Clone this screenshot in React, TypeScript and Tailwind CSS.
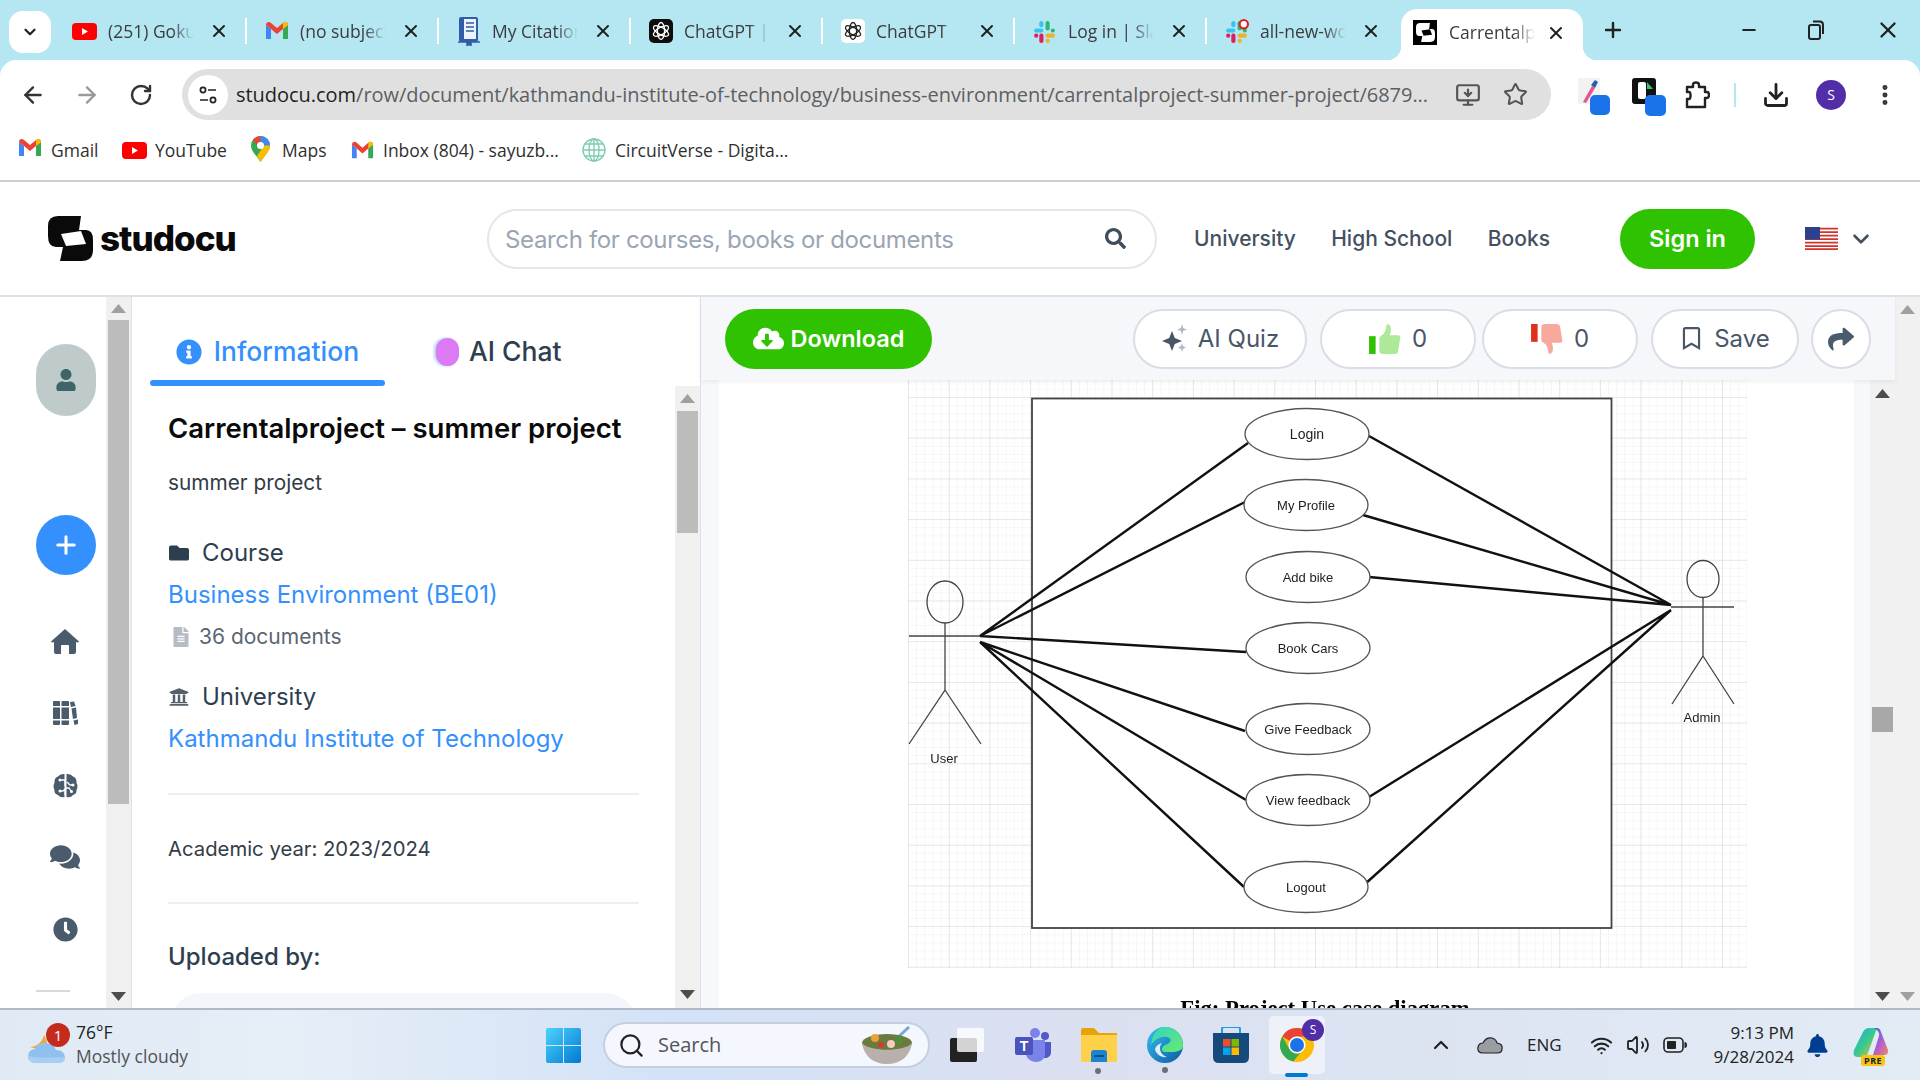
import React from "react";
import { ArrowLeft, ArrowRight, RotateCw, X, Plus, Minus, Star, MonitorDown, Download, EllipsisVertical, ChevronDown, ChevronUp, Search, Volume2, Wifi } from "lucide-react";
import { FaUser, FaComments, FaClock, FaFolder, FaFileAlt, FaUniversity, FaShare, FaRegBookmark, FaCloudDownloadAlt, FaInfoCircle, FaSearch, FaBell } from "react-icons/fa";

const Gmail = ({ s = 24 }: { s?: number }) => (
  <svg width={s} height={s} viewBox="0 0 24 24" className="shrink-0">
    <path d="M1 6v14h5V10z" fill="#4285f4" />
    <path d="M18 10v10h5V6z" fill="#34a853" />
    <path d="M1 6c0-3 3-4 5-2l6 5 6-5c2-2 5-1 5 2l-5 4-6 5-6-5z" fill="#ea4335" />
    <path d="M18 4c2-2 5-1 5 2l-5 4z" fill="#fbbc04" />
  </svg>
);
const YT = () => (
  <svg width="25" height="17" viewBox="0 0 25 17" className="shrink-0">
    <rect width="25" height="17" rx="4" fill="#f00" />
    <path d="M10 5l6 3.500-6 3.500z" fill="#fff" />
  </svg>
);
const Slack = ({ dot }: { dot?: boolean }) => (
  <svg width="25" height="25" viewBox="0 0 24 24" className="shrink-0">
    <rect x="2" y="9" width="9" height="4" rx="2" fill="#36c5f0" />
    <rect x="7" y="2" width="4" height="6" rx="2" fill="#36c5f0" />
    <rect x="13" y="2" width="4" height="9" rx="2" fill="#2eb67d" />
    <rect x="18" y="9" width="4" height="4" rx="2" fill="#2eb67d" />
    <rect x="13" y="14" width="9" height="4" rx="2" fill="#ecb22e" />
    <rect x="13" y="19" width="4" height="4" rx="2" fill="#ecb22e" />
    <rect x="7" y="14" width="4" height="9" rx="2" fill="#e01e5a" />
    <rect x="2" y="14" width="4" height="4" rx="2" fill="#e01e5a" />
    {dot && <circle cx="19" cy="5" r="4" fill="#fff" stroke="#e01e1e" strokeWidth="2" />}
  </svg>
);
const Gpt = ({ dark }: { dark?: boolean }) => (
  <svg width="24" height="24" viewBox="0 0 24 24" className="shrink-0">
    <rect width="24" height="24" rx="5" fill={dark ? "#0d0d0d" : "#fff"} />
    <g fill="none" stroke={dark ? "#fff" : "#222"} strokeWidth="1.300">
      <ellipse cx="12" cy="12" rx="8.500" ry="3.600" transform="rotate(30 12 12)" />
      <ellipse cx="12" cy="12" rx="8.500" ry="3.600" transform="rotate(90 12 12)" />
      <ellipse cx="12" cy="12" rx="8.500" ry="3.600" transform="rotate(150 12 12)" />
    </g>
  </svg>
);
const Cite = () => (
  <svg width="24" height="30" viewBox="0 0 24 30" className="shrink-0">
    <rect x="2" y="1" width="19" height="25" rx="2" fill="#2f5da8" />
    <rect x="7" y="3" width="12" height="20" fill="#eef3fb" />
    <path d="M9 7h8M9 11h8M9 15h8" stroke="#2f5da8" strokeWidth="1.500" />
    <path d="M1 26h22M10 26v4l2-2 2 2v-4" stroke="#2f5da8" strokeWidth="1.500" fill="#2f5da8" />
  </svg>
);
const LogoMark = ({ s = 45, fg = "#0a0a0a", bg = "#fff" }: { s?: number; fg?: string; bg?: string }) => (
  <svg width={s} height={s} viewBox="0 0 45 45" className="shrink-0">
    <path d="M10 0H33L31 14H38Q45 14 45 24V34Q45 45 34 45H12L15 31H8Q0 31 0 20V10Q0 0 10 0Z" fill={fg} />
    <path d="M13 18L33 15L38 28L18 30Z" fill={bg} />
  </svg>
);

const Tab = ({ icon, label, last }: { icon: React.ReactNode; label: string; last?: boolean }) => (
  <div className="flex h-[30px] w-[192px] shrink-0 items-center pl-[17px]">
    <span className="flex w-[25px] shrink-0 justify-center">{icon}</span>
    <span className="ml-[11px] w-[86px] shrink-0 overflow-hidden whitespace-nowrap text-[17.500px] text-[#3c3c3c] [mask-image:linear-gradient(to_right,#000_75%,transparent)]">{label}</span>
    <X size={20} strokeWidth={2.4} className="ml-[15px] shrink-0 text-[#1f1f1f]" />
    <span className={`ml-[16px] h-[26px] w-[2px] shrink-0 ${last ? "bg-transparent" : "bg-white"}`} />
  </div>
);

const Tune = () => (
  <svg width="20" height="20" viewBox="0 0 20 20" fill="none" stroke="#222" strokeWidth="1.700">
    <circle cx="5" cy="5" r="2.600" />
    <path d="M10 5h8M2 15h8" />
    <circle cx="15" cy="15" r="2.600" />
  </svg>
);

const ExtA = () => (
  <div className="relative h-[34px] w-[32px]">
    <svg width="24" height="26" viewBox="0 0 24 26">
      <rect width="22" height="26" fill="#f2f2f2" />
      <path d="M5 24L14 8l3 2-9 15z" fill="#e8548a" />
      <path d="M13 7l4-5 3 2-3 6z" fill="#2a5db0" />
    </svg>
    <span className="absolute bottom-[-3px] right-0 h-[20px] w-[20px] rounded-[5px] bg-[#1a73e8]" />
  </div>
);
const ExtB = () => (
  <div className="relative h-[34px] w-[34px]">
    <svg width="24" height="26" viewBox="0 0 24 26">
      <rect width="24" height="26" rx="3" fill="#111" />
      <rect x="6" y="4" width="8" height="17" rx="2" fill="#fff" />
      <path d="M15 4l6 7h-6z" fill="#35c46f" />
    </svg>
    <span className="absolute bottom-[-4px] right-0 h-[21px] w-[21px] rounded-[5px] bg-[#1a73e8]" />
  </div>
);
const PuzzleIcon = () => (
  <svg width="26" height="28" viewBox="0 0 26 28" fill="none" stroke="#222" strokeWidth="2.400" strokeLinejoin="round" className="shrink-0">
    <path d="M3 6H9V4Q9 1.500 12 1.500T15 4V6H21V11H23Q25 11 25 14T23 17H21V26H3V18H5Q6.500 18 6.500 14.500T5 11H3Z" />
  </svg>
);

const Arrow = ({ up, color = "#6b6b6b" }: { up?: boolean; color?: string }) => (
  <svg width="15" height="9" viewBox="0 0 15 9">
    <path d={up ? "M7.500 0L15 9H0z" : "M0 0H15L7.500 9z"} fill={color} />
  </svg>
);

const Home = () => (
  <svg width="28" height="25" viewBox="0 0 28 25" fill="#4a5b6c">
    <path d="M14 0L28 12.500Q27 14 25 13V23Q25 25 23 25H18V17Q18 16 17 16H11Q10 16 10 17V25H5Q3 25 3 23V13Q1 14 0 12.500Z" />
  </svg>
);
const Library = () => (
  <svg width="25" height="24" viewBox="0 0 25 24" fill="#4a5b6c">
    <path d="M1 0H6.500Q7 0 7 1V5H0V1Q0 0 1 0ZM0 6.500H7V18H0ZM0 19.500H7V23Q7 24 6 24H1Q0 24 0 23Z" />
    <path d="M9.500 0H15Q16 0 16 1V5H8.500V1Q8.500 0 9.500 0ZM8.500 6.500H16V18H8.500ZM8.500 19.500H16V23Q16 24 15 24H9.500Q8.500 24 8.500 23Z" />
    <path d="M17 1L21 .5L22.500 5L18 6ZM18.500 7.500L23 6.500L24 17L20 18ZM20.500 19.500L25 18.500L25 23L21.500 24Z" />
  </svg>
);
const Brain = () => (
  <svg width="25" height="25" viewBox="0 0 25 25">
    <path d="M11.500 1V24Q7 25 5 22Q1 21 1.500 17Q-.5 13 1.500 10Q1 5 5 3.500Q7 .5 11.500 1ZM13.500 1Q18 .5 20 3.500Q24 5 23.500 10Q25.500 13 23.500 17Q24 21 20 22Q18 25 13.500 24Z" fill="#4a5b6c" />
    <path d="M8 7H12V13M8 18H10L12 16V22M14 9L17 12H20M12.500 15H16L18 18" fill="none" stroke="#fff" strokeWidth="1.300" />
    <circle cx="7" cy="7" r="1.500" fill="#fff" />
    <circle cx="7" cy="18" r="1.500" fill="#fff" />
    <circle cx="18.500" cy="18.500" r="1.500" fill="#fff" />
    <circle cx="20" cy="12" r="1.500" fill="#fff" />
  </svg>
);

const Sparkle = () => (
  <svg width="26" height="30" viewBox="0 0 26 30">
    <path d="M11 7l2.800 7L21 17l-7.200 3L11 27l-2.800-7L1 17l7.200-3z" fill="#4a5668" />
    <path d="M21 0l1.200 4L26 5.500l-3.800 1.500L21 11l-1.200-4L16 5.500l3.800-1.500zM21 19l1 3 3 1.500-3 1.500-1 3-1-3-3-1.500 3-1.500z" fill="#b4bac4" />
  </svg>
);
const Thumb = ({ down }: { down?: boolean }) => (
  <svg width="32" height="30" viewBox="0 0 34 32" className={down ? "-scale-y-100" : ""}>
    <rect x="0" y="13" width="7" height="19" fill={down ? "#e0301e" : "#2ec200"} />
    <path d="M11 14L16 10C18 7 18 3 19 0C23 0 24 4 23 9L22 12H31C33 12 34 14 33 16L31 29C31 31 29 32 27 32H15C13 32 11 31 11 29Z" fill={down ? "#f6a99c" : "#aee99a"} />
  </svg>
);

const PillBtn = ({ w, className = "", children }: { w: string; className?: string; children: React.ReactNode }) => (
  <div className={`flex h-[60px] shrink-0 items-center justify-center gap-[11px] rounded-full border-2 border-[#d9dde5] bg-white text-[24px] font-normal text-[#4a5668] ${w} ${className}`}>{children}</div>
);

const Ell = ({ cx, cy, label, size = 13 }: { cx: number; cy: number; label: string; size?: number }) => (
  <g>
    <ellipse cx={cx} cy={cy} rx="62" ry="25.500" fill="#fff" stroke="#555" strokeWidth="1.300" />
    <text x={cx} y={cy + 4.500} textAnchor="middle" fontSize={size} fill="#222" fontFamily="Liberation Sans">{label}</text>
  </g>
);

const Diagram = () => (
  <svg width="1135" height="628" viewBox="719 380 1135 628" className="block blur-[0.35px]">
    <defs>
      <pattern id="minor" x="908" y="397" width="8.140" height="8.140" patternUnits="userSpaceOnUse">
        <path d="M8.140 0H0V8.140" fill="none" stroke="#efefef" strokeWidth="1" />
      </pattern>
      <pattern id="major" x="908" y="397" width="40.700" height="40.700" patternUnits="userSpaceOnUse">
        <path d="M40.700 0H0V40.700" fill="none" stroke="#d8d8d8" strokeWidth="1" />
      </pattern>
    </defs>
    <rect x="908" y="380" width="839" height="588" fill="url(#minor)" />
    <rect x="908" y="380" width="839" height="588" fill="url(#major)" />
    <rect x="1032" y="398.500" width="579.500" height="529.500" fill="#fff" stroke="#444" strokeWidth="1.800" />
    <g stroke="#111" strokeWidth="2.400" fill="none">
      <path d="M980 636L1248 443M980 636L1245 502M980 636L1246 652M980 642L1245 731M980 642L1246 800M980 642L1244 887" />
      <path d="M1671 605L1369 436M1671 605L1363 515M1671 605L1369 577M1671 610L1369 797M1671 610L1365 884" />
    </g>
    <Ell cx={1307} cy={434} label="Login" size={14} />
    <Ell cx={1306} cy={505} label="My Profile" />
    <Ell cx={1308} cy={577} label="Add bike" />
    <Ell cx={1308} cy={648} label="Book Cars" />
    <Ell cx={1308} cy={729} label="Give Feedback" />
    <Ell cx={1308} cy={800} label="View feedback" />
    <Ell cx={1306} cy={887} label="Logout" />
    <g stroke="#444" strokeWidth="1.300" fill="none">
      <ellipse cx="945" cy="602" rx="18" ry="21" />
      <path d="M909 636H980M945 623V690L909 744M945 690L981 744" />
      <ellipse cx="1703" cy="579" rx="16" ry="18.500" />
      <path d="M1671 607H1734M1703 598V656L1672 704M1703 656L1734 704" />
    </g>
    <text x="944" y="763" textAnchor="middle" fontSize="13" fill="#222" fontFamily="Liberation Sans">User</text>
    <text x="1702" y="722" textAnchor="middle" fontSize="13" fill="#222" fontFamily="Liberation Sans">Admin</text>
    <text x="1325" y="1015.500" textAnchor="middle" fontSize="22.700" fontWeight="700" fill="#000" fontFamily="Liberation Serif">Fig: Project Use case diagram</text>
  </svg>
);

const Win = () => (
  <svg width="35" height="35" viewBox="0 0 35 35" className="shrink-0">
    <defs>
      <linearGradient id="w1" x1="0" y1="0" x2="1" y2="1"><stop offset="0" stopColor="#4cd4fb" /><stop offset="1" stopColor="#0078d4" /></linearGradient>
    </defs>
    <path d="M2 0H17V17H0V2Q0 0 2 0ZM18 0H33Q35 0 35 2V17H18ZM0 18H17V35H2Q0 35 0 33ZM18 18H35V33Q35 35 33 35H18Z" fill="url(#w1)" />
  </svg>
);
const Bowl = () => (
  <svg width="52" height="38" viewBox="0 0 52 38" className="shrink-0">
    <path d="M32 16L48 1" stroke="#7aa5dd" strokeWidth="3" />
    <ellipse cx="26" cy="17" rx="25" ry="9" fill="#6b7a3e" />
    <circle cx="14" cy="12" r="4" fill="#e9a13b" />
    <circle cx="20" cy="19" r="3" fill="#d13c2e" />
    <circle cx="38" cy="14" r="4" fill="#4f8f3b" />
    <circle cx="30" cy="18" r="4" fill="#f2cfc0" />
    <path d="M1 17C3 30 12 38 26 38S49 30 51 17C44 26 8 26 1 17Z" fill="#b7b0ad" />
  </svg>
);
const Teams = () => (
  <svg width="36" height="34" viewBox="0 0 36 34" className="shrink-0">
    <circle cx="20" cy="5" r="5" fill="#7b83eb" />
    <circle cx="30" cy="8" r="4" fill="#5059c9" />
    <path d="M26 14h10v10c0 4-3 6-6 6s-4-2-4-4z" fill="#5059c9" />
    <path d="M11 12h19v14c0 5-4 8-9 8s-10-4-10-8z" fill="#7b83eb" />
    <rect x="0" y="9" width="18" height="18" rx="2" fill="#4b53bc" />
    <text x="9" y="23" textAnchor="middle" fontSize="14" fontWeight="700" fill="#fff" fontFamily="Liberation Sans">T</text>
  </svg>
);
const Folder = () => (
  <svg width="36" height="34" viewBox="0 0 36 34" className="shrink-0">
    <path d="M0 2Q0 0 2 0H13L18 5H36V12H0Z" fill="#e5a50a" />
    <path d="M0 7H36V34H0Z" fill="#ffd04a" />
    <path d="M10 34V25Q10 22 13 22H23Q26 22 26 25V34Z" fill="#1b83d0" />
    <rect x="13" y="27" width="10" height="2" fill="#0f4f86" />
  </svg>
);
const Edge = () => (
  <svg width="36" height="36" viewBox="0 0 36 36" className="shrink-0">
    <defs>
      <linearGradient id="e1" x1="0" y1="0" x2="1" y2="1"><stop offset="0" stopColor="#35c1f1" /><stop offset="1" stopColor="#0c59a4" /></linearGradient>
      <linearGradient id="e2" x1="0" y1="0" x2="1" y2="1"><stop offset="0" stopColor="#36d4c2" /><stop offset="1" stopColor="#66eb6e" /></linearGradient>
    </defs>
    <circle cx="18" cy="18" r="18" fill="url(#e1)" />
    <path d="M18 0C28 0 36 8 36 18C36 24 30 25 24 25H18C14 25 14 20 18 18C24 16 26 12 20 10C14 9 8 12 4 18C5 8 10 0 18 0Z" fill="url(#e2)" />
    <path d="M15 16C11 20 13 28 20 30C14 31 9 27 8 22C9 19 11 17 15 16Z" fill="#fff" fillOpacity=".85" />
  </svg>
);
const Store = () => (
  <svg width="36" height="36" viewBox="0 0 36 36" className="shrink-0">
    <path d="M9 6V2Q9 0 11 0H25Q27 0 27 2V6" fill="none" stroke="#1ba0e2" strokeWidth="2" />
    <path d="M0 6H36V30Q36 36 30 36H6Q0 36 0 30Z" fill="#174a7c" />
    <rect x="10" y="12" width="7.500" height="7.500" fill="#e8502a" />
    <rect x="18.500" y="12" width="7.500" height="7.500" fill="#7fb800" />
    <rect x="10" y="20.500" width="7.500" height="7.500" fill="#00a4ef" />
    <rect x="18.500" y="20.500" width="7.500" height="7.500" fill="#ffb900" />
  </svg>
);
const Chrome = () => (
  <svg width="34" height="36" viewBox="0 0 34 34" className="shrink-0">
    <circle cx="17" cy="17" r="17" fill="#fbbc04" />
    <path d="M17 0A17 17 0 0 1 31.700 8.500H17A8.500 8.500 0 0 0 9.600 12.800L2.300 8.400A17 17 0 0 1 17 0Z" fill="#ea4335" />
    <path d="M2.300 8.400L9.600 21.200A8.500 8.500 0 0 0 20 25L13.300 33.600A17 17 0 0 1 2.300 8.400Z" fill="#34a853" />
    <circle cx="17" cy="17" r="8.500" fill="#fff" />
    <circle cx="17" cy="17" r="7" fill="#1a73e8" />
  </svg>
);
const Copilot = () => (
  <svg width="36" height="34" viewBox="0 0 36 34" className="shrink-0">
    <defs>
      <linearGradient id="c1" x1="0" y1="0" x2="1" y2="1"><stop offset="0" stopColor="#2aa7e0" /><stop offset=".5" stopColor="#37c98f" /><stop offset="1" stopColor="#f1c232" /></linearGradient>
      <linearGradient id="c2" x1="0" y1="0" x2="1" y2="1"><stop offset="0" stopColor="#1f6fe0" /><stop offset=".5" stopColor="#b05ad6" /><stop offset="1" stopColor="#f08a5d" /></linearGradient>
    </defs>
    <path d="M10 5Q12 1 16 1H24L15 26Q14 30 10 30H5Q-1 30 1 23Z" fill="url(#c1)" />
    <path d="M21 1H24Q27 1 28 5L35 23Q36 28 31 28H20L26 9Q27 4 21 1Z" fill="url(#c2)" />
  </svg>
);
const TaskView = () => (
  <div className="relative h-[34px] w-[34px] shrink-0">
    <span className="absolute bottom-0 left-0 h-[24px] w-[27px] rounded-[2px] bg-[#222]" />
    <span className="absolute right-0 top-0 h-[24px] w-[27px] rounded-[2px] bg-white/80" />
  </div>
);
const Battery = () => (
  <svg width="24" height="16" viewBox="0 0 24 16" fill="none" className="shrink-0">
    <rect x="1" y="1" width="19" height="14" rx="4" stroke="#222" strokeWidth="1.600" />
    <rect x="4" y="4" width="9" height="8" rx="1" fill="#222" />
    <path d="M21.500 5Q24 5 24 8T21.500 11Z" fill="#222" />
  </svg>
);

export default function App() {
  return (
    <div className="flex h-[1080px] w-[1920px] flex-col overflow-hidden bg-white font-['Inter',sans-serif]">
      {/* Browser chrome */}
      <div className="bg-[#b5e7f3] font-['Open_Sans',sans-serif]">
        <div className="flex h-[60px] items-center">
          <div className="mb-[-3px] ml-[9px] flex h-[42px] w-[42px] shrink-0 items-center justify-center rounded-[14px] bg-white">
            <ChevronDown size={18} strokeWidth={3} className="text-[#222]" />
          </div>
          <div className="ml-[4px] flex items-center pt-[2px]">
            <Tab icon={<YT />} label="(251) Goku" />
            <Tab icon={<Gmail />} label="(no subject)" />
            <Tab icon={<Cite />} label="My Citations" />
            <Tab icon={<Gpt dark />} label="ChatGPT | OpenAI" />
            <Tab icon={<Gpt />} label="ChatGPT" />
            <Tab icon={<Slack />} label="Log in | Slack" />
            <Tab icon={<Slack dot />} label="all-new-workspace" last />
          </div>
          <div className="relative ml-[2px] flex h-[51px] w-[182px] shrink-0 items-center self-end rounded-t-[16px] bg-white pb-[4px] pl-[12px]">
            <span className="absolute bottom-0 left-[-14px] h-[14px] w-[14px] bg-[radial-gradient(circle_at_0_0,transparent_14px,white_14.5px)]" />
            <span className="absolute bottom-0 right-[-14px] h-[14px] w-[14px] bg-[radial-gradient(circle_at_100%_0,transparent_14px,white_14.5px)]" />
            <span className="flex h-[25px] w-[24px] shrink-0 items-center justify-center bg-black"><LogoMark s={19} fg="#fff" bg="#000" /></span>
            <span className="ml-[12px] w-[86px] overflow-hidden whitespace-nowrap text-[17.500px] text-[#3c3c3c] [mask-image:linear-gradient(to_right,#000_75%,transparent)]">Carrentalproject</span>
            <X size={20} strokeWidth={2.4} className="ml-[11px] shrink-0 text-[#1f1f1f]" />
          </div>
          <Plus size={24} strokeWidth={2.4} className="ml-[18px] shrink-0 text-[#222]" />
          <Minus size={20} strokeWidth={2.4} className="ml-[114px] shrink-0 text-[#222]" />
          <svg width="18" height="20" viewBox="0 0 18 20" fill="none" stroke="#222" strokeWidth="2" className="ml-[48px] shrink-0">
            <rect x="2" y="5" width="11" height="14" rx="2" />
            <path d="M6 1.500H13Q16 1.500 16 5V14" />
          </svg>
          <X size={26} strokeWidth={2.2} className="ml-[50px] shrink-0 text-[#222]" />
        </div>
        <div className="rounded-t-[16px] bg-white">
          <div className="flex h-[69px] items-center">
            <ArrowLeft size={26} strokeWidth={2.2} className="ml-[20px] shrink-0 text-[#333]" />
            <ArrowRight size={26} strokeWidth={2.2} className="ml-[28px] shrink-0 text-[#9a9a9a]" />
            <RotateCw size={24} strokeWidth={2.4} className="ml-[29px] shrink-0 text-[#333]" />
            <div className="ml-[29px] flex h-[51px] w-[1369px] shrink-0 items-center rounded-full bg-[#e0e0e0] pl-[6px]">
              <span className="flex h-[40px] w-[40px] shrink-0 items-center justify-center rounded-full bg-white"><Tune /></span>
              <span className="ml-[8px] w-[1194px] shrink-0 overflow-hidden whitespace-nowrap text-[20px] tracking-[-0.03px] text-[#5c5f62]"><span className="text-[#1f1f1f]">studocu.com</span>/row/document/kathmandu-institute-of-technology/business-environment/carrentalproject-summer-project/6879...</span>
              <MonitorDown size={26} strokeWidth={2} className="ml-[25px] shrink-0 text-[#555]" />
              <Star size={25} strokeWidth={2} className="ml-[22px] shrink-0 text-[#555]" />
            </div>
            <div className="ml-[27px] shrink-0"><ExtA /></div>
            <div className="ml-[22px] shrink-0"><ExtB /></div>
            <div className="ml-[18px] shrink-0"><PuzzleIcon /></div>
            <span className="ml-[24px] h-[24px] w-[2px] shrink-0 bg-[#b5e7f3]" />
            <Download size={28} strokeWidth={2.4} className="ml-[26px] shrink-0 text-[#222]" />
            <span className="ml-[26px] flex h-[30px] w-[30px] shrink-0 items-center justify-center rounded-full bg-[#512da8] text-[14px] text-white">S</span>
            <EllipsisVertical size={26} strokeWidth={2.6} className="ml-[26px] shrink-0 text-[#333]" />
          </div>
          <div className="flex h-[51px] items-start pt-[7px] text-[17.500px] leading-[28px] text-[#2f2f2f]">
            <span className="ml-[18px] flex w-[24px] items-center"><Gmail /></span>
            <span className="ml-[9px] w-[71px]">Gmail</span>
            <span className="flex h-[28px] w-[25px] items-center"><YT /></span>
            <span className="ml-[8px] w-[96px]">YouTube</span>
            <svg width="19" height="26" viewBox="0 0 19 26" className="shrink-0">
              <path d="M9.500 0A9.500 9.500 0 0 0 0 9.500C0 15 5 19 9.500 26C14 19 19 15 19 9.500A9.500 9.500 0 0 0 9.500 0Z" fill="#34a853" />
              <path d="M2 4A9.500 9.500 0 0 1 9.500 0V6A3.500 3.500 0 0 0 6 9.500z" fill="#ea4335" />
              <path d="M9.500 0A9.500 9.500 0 0 1 19 9.500H13A3.500 3.500 0 0 0 9.500 6z" fill="#4285f4" />
              <path d="M19 9.500C19 15 14 19 9.500 26L6 20 13 9.500z" fill="#fbbc04" />
              <circle cx="9.500" cy="9.500" r="3.500" fill="#fff" />
            </svg>
            <span className="ml-[12px] w-[69px]">Maps</span>
            <span className="flex h-[28px] w-[23px] items-center"><Gmail s={23} /></span>
            <span className="ml-[9px] w-[199px] overflow-hidden whitespace-nowrap">Inbox (804) - sayuzb...</span>
            <svg width="24" height="24" viewBox="0 0 24 24" fill="none" stroke="#7fcdb0" strokeWidth="1.400" className="mt-[2px] shrink-0">
              <circle cx="12" cy="12" r="11" />
              <ellipse cx="12" cy="12" rx="5" ry="11" />
              <path d="M1 12H23M3 6H21M3 18H21M12 1V23" />
            </svg>
            <span className="ml-[9px] whitespace-nowrap">CircuitVerse - Digita...</span>
          </div>
          <div className="h-[2px] bg-[#cfcfcf]" />
        </div>
      </div>

      {/* Studocu header */}
      <div className="flex h-[115px] shrink-0 items-center border-b-2 border-[#dde1e8]">
        <div className="flex w-[487px] shrink-0 items-center pl-[48px]">
          <LogoMark />
          <span className="ml-[7px] text-[35px] font-extrabold tracking-[-1px] text-[#0a0a0a]">studocu</span>
        </div>
        <div className="flex h-[60px] w-[670px] shrink-0 items-center justify-between rounded-full border-2 border-[#e3e6ec] pl-[16px] pr-[29px]">
          <span className="pt-[2px] text-[24px] tracking-[-0.350px] text-[#9aa5b4]">Search for courses, books or documents</span>
          <FaSearch size={21} className="text-[#3f4c5c]" />
        </div>
        <div className="ml-[37px] flex w-[356px] shrink-0 justify-between text-[21px] font-medium text-[#44505f]">
          <span>University</span>
          <span>High School</span>
          <span>Books</span>
        </div>
        <div className="ml-[70px] flex h-[60px] w-[135px] shrink-0 items-center justify-center rounded-full bg-[#2ec200] text-[23.500px] font-semibold text-white">Sign in</div>
        <svg width="33" height="23" viewBox="0 0 33 23" className="ml-[50px] shrink-0">
          <rect width="33" height="23" fill="#fff" />
          <path d="M0 1.700H33M0 5.200H33M0 8.700H33M0 12.200H33M0 15.700H33M0 19.200H33M0 22.200H33" stroke="#d0342c" strokeWidth="1.800" />
          <rect width="15" height="12.500" fill="#2d3f8f" />
        </svg>
        <ChevronDown size={26} strokeWidth={2.4} className="ml-[10px] shrink-0 text-[#44505f]" />
      </div>

      {/* Body */}
      <div className="flex h-[711px] shrink-0">
        {/* Rail */}
        <div className="flex w-[132px] shrink-0 border-r border-[#dde1e8]">
          <div className="ml-[36px] flex w-[70px] shrink-0 flex-col pr-[10px]">
            <div className="mt-[47px] flex h-[72px] w-[60px] items-center justify-center rounded-full bg-[#bfcbcb]">
              <FaUser size={22} className="text-[#3f6468]" />
            </div>
            <div className="mt-[99px] flex h-[60px] w-[60px] items-center justify-center rounded-full bg-[#3490fc]">
              <Plus size={28} strokeWidth={2.6} className="text-white" />
            </div>
            <div className="mt-[30px] flex h-[72px] items-center justify-center pr-[2px]"><Home /></div>
            <div className="flex h-[72px] items-center justify-center pr-[2px]"><Library /></div>
            <div className="flex h-[72px] items-center justify-center pr-[2px]"><Brain /></div>
            <div className="flex h-[72px] items-center justify-center pr-[2px]"><FaComments size={30} className="text-[#4a5b6c]" /></div>
            <div className="flex h-[72px] items-center justify-center pr-[2px]"><FaClock size={25} className="text-[#4a5b6c]" /></div>
            <div className="mt-[25px] h-[2px] w-[34px] bg-[#d6dae0]" />
          </div>
          <div className="flex w-[25px] shrink-0 flex-col items-center bg-[#f0f0f0]">
            <div className="flex h-[23px] items-center"><Arrow up color="#a0a0a0" /></div>
            <div className="h-[484px] w-[21px] bg-[#bcbcbc]" />
            <div className="mt-auto flex h-[24px] items-center"><Arrow color="#4d4d4d" /></div>
          </div>
        </div>

        {/* Info panel */}
        <div className="flex w-[569px] shrink-0 flex-col border-r border-[#dde1e8]">
          <div className="flex h-[89px] shrink-0 pl-[18px]">
            <div className="w-[235px]">
              <div className="flex h-[83px] items-center justify-center gap-[12px] pt-[27px] text-[26.500px] font-medium text-[#3490fc]">
                <FaInfoCircle size={26} />
                <span>Information</span>
              </div>
              <div className="h-[6px] rounded-full bg-[#3490fc]" />
            </div>
            <div className="ml-[51px] flex h-[83px] items-center pt-[27px] text-[26.500px] font-medium text-[#2d3e50]">
              <span className="h-[28px] w-[23px] rounded-full bg-[#dc7af6] shadow-[-2px_0_3px_#b8c8f5]" />
              <span className="ml-[10px]">AI Chat</span>
            </div>
          </div>
          <div className="flex h-[622px] overflow-hidden">
            <div className="ml-[36px] w-[471px] shrink-0 overflow-hidden">
              <div className="mt-[22px] h-[40px] whitespace-nowrap text-[27.500px] font-semibold leading-[40px] text-[#0a0a0a]">Carrentalproject – summer project</div>
              <div className="mt-[20px] h-[30px] text-[20.800px] leading-[30px] text-[#333c46]">summer project</div>
              <div className="mt-[38px] flex h-[34px] items-center text-[24px] leading-[34px] text-[#2d3e50]">
                <FaFolder size={20} className="ml-[1px] text-[#2d3e50]" />
                <span className="ml-[13px]">Course</span>
              </div>
              <div className="mt-[8px] h-[34px] whitespace-nowrap text-[24px] leading-[34px] text-[#3490fc]">Business Environment (BE01)</div>
              <div className="mt-[10px] flex h-[30px] items-center text-[21px] leading-[30px] text-[#5a6672]">
                <FaFileAlt size={20} className="ml-[3px] text-[#b6bcc4]" />
                <span className="ml-[8px]">36 documents</span>
              </div>
              <div className="mt-[28px] flex h-[34px] items-center text-[24px] leading-[34px] text-[#2d3e50]">
                <FaUniversity size={20} className="ml-[1px] text-[#55606d]" />
                <span className="ml-[13px]">University</span>
              </div>
              <div className="mt-[8px] h-[34px] whitespace-nowrap text-[24px] leading-[34px] text-[#3490fc]">Kathmandu Institute of Technology</div>
              <div className="mt-[37px] h-[2px] bg-[#eceef1]" />
              <div className="mt-[39px] h-[30px] text-[20.300px] leading-[30px] text-[#333c46]">Academic year: 2023/2024</div>
              <div className="mt-[38px] h-[2px] bg-[#eceef1]" />
              <div className="mt-[36px] h-[34px] text-[24px] font-medium leading-[34px] text-[#2d3e50]">Uploaded by:</div>
              <div className="ml-[3px] mt-[19px] h-[60px] w-[465px] rounded-t-[30px] bg-[#f3f7fc]" />
            </div>
            <div className="ml-auto flex w-[25px] shrink-0 flex-col items-center bg-[#f0f0f0]">
              <div className="flex h-[25px] items-center"><Arrow up color="#a0a0a0" /></div>
              <div className="h-[122px] w-[21px] bg-[#bcbcbc]" />
              <div className="mt-auto flex h-[28px] items-center"><Arrow color="#4d4d4d" /></div>
            </div>
          </div>
        </div>

        {/* Document */}
        <div className="flex min-w-0 flex-1">
          <div className="flex w-[1194px] shrink-0 flex-col">
            <div className="relative z-10 flex h-[83px] shrink-0 items-center bg-[#f5f7fb] pl-[24px] shadow-[0_2px_4px_rgba(0,0,0,0.06)]">
              <div className="flex h-[60px] w-[207px] shrink-0 items-center justify-center gap-[7px] rounded-full bg-[#2ec200] text-[23.500px] font-semibold text-white">
                <FaCloudDownloadAlt size={31} />
                <span>Download</span>
              </div>
              <PillBtn w="w-[174px]" className="ml-[201px]"><Sparkle /><span>AI Quiz</span></PillBtn>
              <PillBtn w="w-[156px]" className="ml-[13px]"><Thumb /><span>0</span></PillBtn>
              <PillBtn w="w-[156px]" className="ml-[6px]"><Thumb down /><span>0</span></PillBtn>
              <PillBtn w="w-[148px]" className="ml-[13px]"><FaRegBookmark size={23} /><span>Save</span></PillBtn>
              <PillBtn w="w-[60px]" className="ml-[12px]"><FaShare size={26} className="text-[#4a5b6c]" /></PillBtn>
            </div>
            <div className="flex h-[628px] bg-[#f7f8fb]">
              <div className="ml-[18px] h-[628px] w-[1135px] shrink-0 overflow-hidden bg-white"><Diagram /></div>
              <div className="ml-auto flex w-[25px] shrink-0 flex-col items-center bg-[#f1f1f1]">
                <div className="flex h-[26px] items-center"><Arrow up color="#4d4d4d" /></div>
                <div className="mt-[301px] h-[25px] w-[21px] bg-[#a8a8a8]" />
                <div className="mt-auto flex h-[24px] items-center"><Arrow color="#4d4d4d" /></div>
              </div>
            </div>
          </div>
          <div className="flex w-[25px] shrink-0 flex-col items-center bg-[#f1f1f1]">
            <div className="flex h-[24px] items-center"><Arrow up color="#a0a0a0" /></div>
            <div className="mt-auto flex h-[24px] items-center"><Arrow color="#a0a0a0" /></div>
          </div>
        </div>
      </div>

      {/* Taskbar */}
      <div className="flex h-[72px] shrink-0 items-center border-t-2 border-[#b0bac6] bg-[linear-gradient(90deg,#dfeaf4_0%,#e6eef7_15%,#d3e2f7_35%,#dbe0f1_55%,#dce4f2_75%,#e2ecf5_100%)] font-['Open_Sans',sans-serif]">
        <div className="relative ml-[28px] h-[44px] w-[42px] shrink-0">
          <svg width="38" height="38" viewBox="0 0 38 38" className="absolute bottom-0 left-0">
            <path d="M2 18C8 18 14 14 16 6C20 12 20 18 16 22Z" fill="#f2a73b" />
            <path d="M8 34Q0 34 0 27Q0 21 7 20Q10 13 18 14Q26 15 28 21Q36 21 37 28Q37 34 30 34Z" fill="#8fc1f0" />
            <path d="M8 34Q0 34 0 27Q14 30 37 28Q37 34 30 34Z" fill="#a9cdf4" />
          </svg>
          <span className="absolute right-0 top-0 flex h-[24px] w-[24px] items-center justify-center rounded-full bg-[#c42b1c] text-[15px] text-white">1</span>
        </div>
        <div className="ml-[6px] w-[120px] shrink-0 pb-[2px] text-[17.500px] leading-[24px]">
          <div className="text-[#222]">76°F</div>
          <div className="whitespace-nowrap text-[#4f5358]">Mostly cloudy</div>
        </div>
        <div className="ml-[350px]"><Win /></div>
        <div className="ml-[22px] flex h-[46px] w-[327px] shrink-0 items-center rounded-full border-2 border-[#c5cfe0] bg-[#f4f7fd] pl-[13px]">
          <Search size={27} strokeWidth={2} className="shrink-0 text-[#222]" />
          <span className="ml-[13px] text-[20px] text-[#555]">Search</span>
          <span className="ml-auto mr-[15px]"><Bowl /></span>
        </div>
        <div className="ml-[20px]"><TaskView /></div>
        <div className="ml-[31px]"><Teams /></div>
        <div className="relative ml-[30px]">
          <Folder />
          <span className="absolute bottom-[-12px] left-[14px] h-[6px] w-[6px] rounded-full bg-[#6b6f76]" />
        </div>
        <div className="relative ml-[30px]">
          <Edge />
          <span className="absolute bottom-[-10px] left-[15px] h-[6px] w-[6px] rounded-full bg-[#6b6f76]" />
        </div>
        <div className="ml-[30px]"><Store /></div>
        <div className="relative ml-[20px] flex h-[58px] w-[56px] shrink-0 items-center justify-center rounded-[5px] bg-white/50">
          <Chrome />
          <span className="absolute right-[1px] top-[3px] flex h-[22px] w-[22px] items-center justify-center rounded-full bg-[#512da8] text-[12px] text-white">S</span>
          <span className="absolute bottom-[-3px] left-[16px] h-[4px] w-[23px] rounded-full bg-[#0078d4]" />
        </div>
        <ChevronUp size={24} strokeWidth={2.2} className="ml-[104px] shrink-0 text-[#222]" />
        <svg width="26" height="18" viewBox="0 0 26 18" className="ml-[24px] shrink-0">
          <path d="M6 17Q0 17 1 11Q2 7 6 7Q9 1 15 2Q19 3 20 7Q26 8 25 13Q25 17 20 17Z" fill="#9a9ea3" stroke="#222" strokeWidth="1.200" />
        </svg>
        <span className="ml-[24px] w-[36px] shrink-0 text-[17px] text-[#222]">ENG</span>
        <Wifi size={23} strokeWidth={2.2} className="ml-[27px] shrink-0 text-[#222]" />
        <Volume2 size={24} strokeWidth={1.8} className="ml-[13px] shrink-0 text-[#222]" />
        <span className="ml-[13px]"><Battery /></span>
        <div className="ml-[16px] w-[91px] shrink-0 whitespace-nowrap text-right text-[17px] leading-[24px] text-[#222]">
          <div>9:13 PM</div>
          <div>9/28/2024</div>
        </div>
        <FaBell size={23} className="ml-[12px] shrink-0 text-[#003e92]" />
        <div className="relative ml-[24px] h-[36px] w-[36px] shrink-0">
          <Copilot />
          <span className="absolute bottom-[-3px] left-[8px] rounded-[3px] bg-[#f5c518] px-[3px] text-[9px] font-bold leading-[11px] tracking-[0.5px] text-[#222]">PRE</span>
        </div>
      </div>
    </div>
  );
}
